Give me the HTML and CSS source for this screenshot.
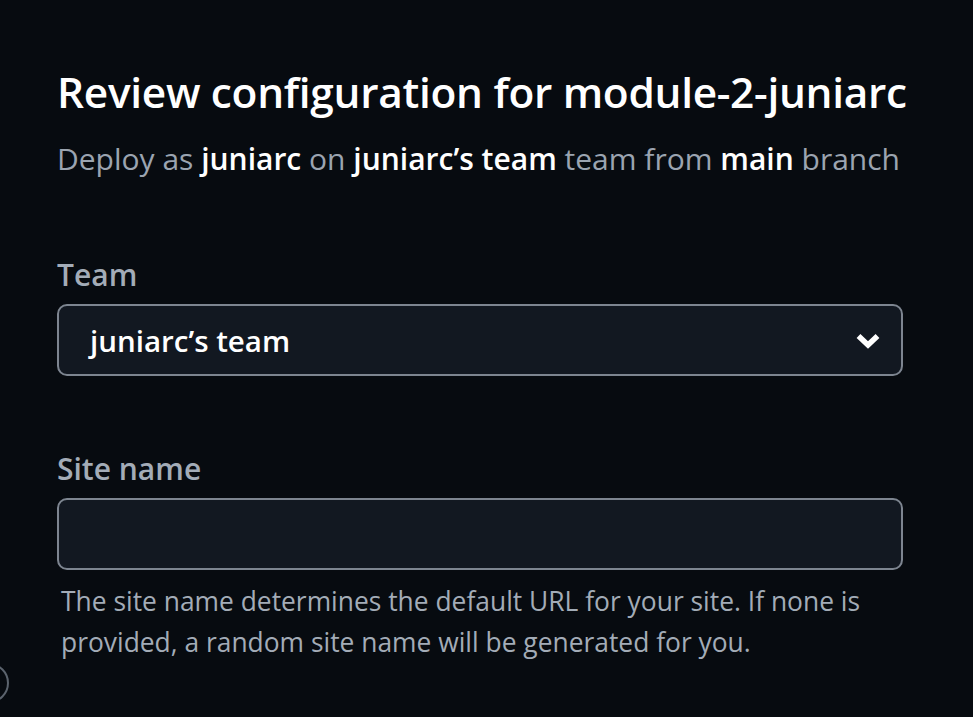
FILE: index.html
```html
<!DOCTYPE html>
<html>
<head>
<meta charset="utf-8">
<link rel="stylesheet" href="styles.css">
</head>
<body>
<main class="page">
  <header class="head">
    <h1 class="title">Review configuration for module-2-juniarc</h1>
    <p class="subtitle">Deploy as <strong>juniarc</strong> on <strong>juniarc’s team</strong> team from <strong>main</strong> branch</p>
  </header>
  <section class="field field-team">
    <label class="label">Team</label>
    <div class="select">
      <span class="select-value">juniarc’s team</span>
      <svg class="chevron" width="24" height="17" viewBox="0 0 24 17"><path d="M2.5 4 L12 13 L21.5 4" fill="none" stroke="#fff" stroke-width="5.5" stroke-linejoin="miter"/></svg>
    </div>
  </section>
  <section class="field field-site">
    <label class="label">Site name</label>
    <div class="input"></div>
    <p class="help">The site name determines the default URL for your site. If none is provided, a random site name will be generated for you.</p>
  </section>
</main>
<div class="help-btn"></div>
</body>
</html>
```
FILE: styles.css
```css
html, body {
  margin: 0;
  padding: 0;
  background: #070b10;
  height: 100%;
  overflow: hidden;
}
body {
  font-family: "Open Sans", "Noto Sans", sans-serif;
  color: #fff;
  position: relative;
}
.page {
  width: 846px;
  padding: 64px 0 0 57px;
  display: flex;
  flex-direction: column;
}
.head {
  display: flex;
  flex-direction: column;
}
.title {
  margin: 0;
  font-size: 42.4px;
  font-weight: 600;
  line-height: 56px;
  color: #fff;
  letter-spacing: -0.3px;
  white-space: nowrap;
}
.subtitle {
  margin: 19px 0 0;
  font-size: 30px;
  line-height: 40px;
  color: #9ba4b0;
  white-space: nowrap;
}
.subtitle strong {
  color: #fff;
  font-weight: 600;
}
.field {
  display: flex;
  flex-direction: column;
}
.field-team { margin-top: 76px; }
.field-site { margin-top: 73px; }
.label {
  font-size: 30px;
  font-weight: 600;
  line-height: 40px;
  color: #a3acb7;
  margin-bottom: 9px;
}
.select, .input {
  box-sizing: border-box;
  height: 72px;
  background: #121821;
  border: 2px solid #7d8590;
  border-radius: 10px;
}
.select {
  display: flex;
  align-items: center;
  justify-content: space-between;
  padding: 0 21px 0 31px;
}
.select-value {
  font-size: 29.5px;
  font-weight: 600;
  color: #fff;
}
.chevron { display: block; }
.help {
  margin: 11px 0 0 4px;
  font-size: 26.4px;
  line-height: 41px;
  color: #a3acb7;
}
.help-btn {
  position: absolute;
  left: -31px;
  top: 663px;
  width: 36px;
  height: 36px;
  border: 2px solid #5b636d;
  border-radius: 50%;
}
```
